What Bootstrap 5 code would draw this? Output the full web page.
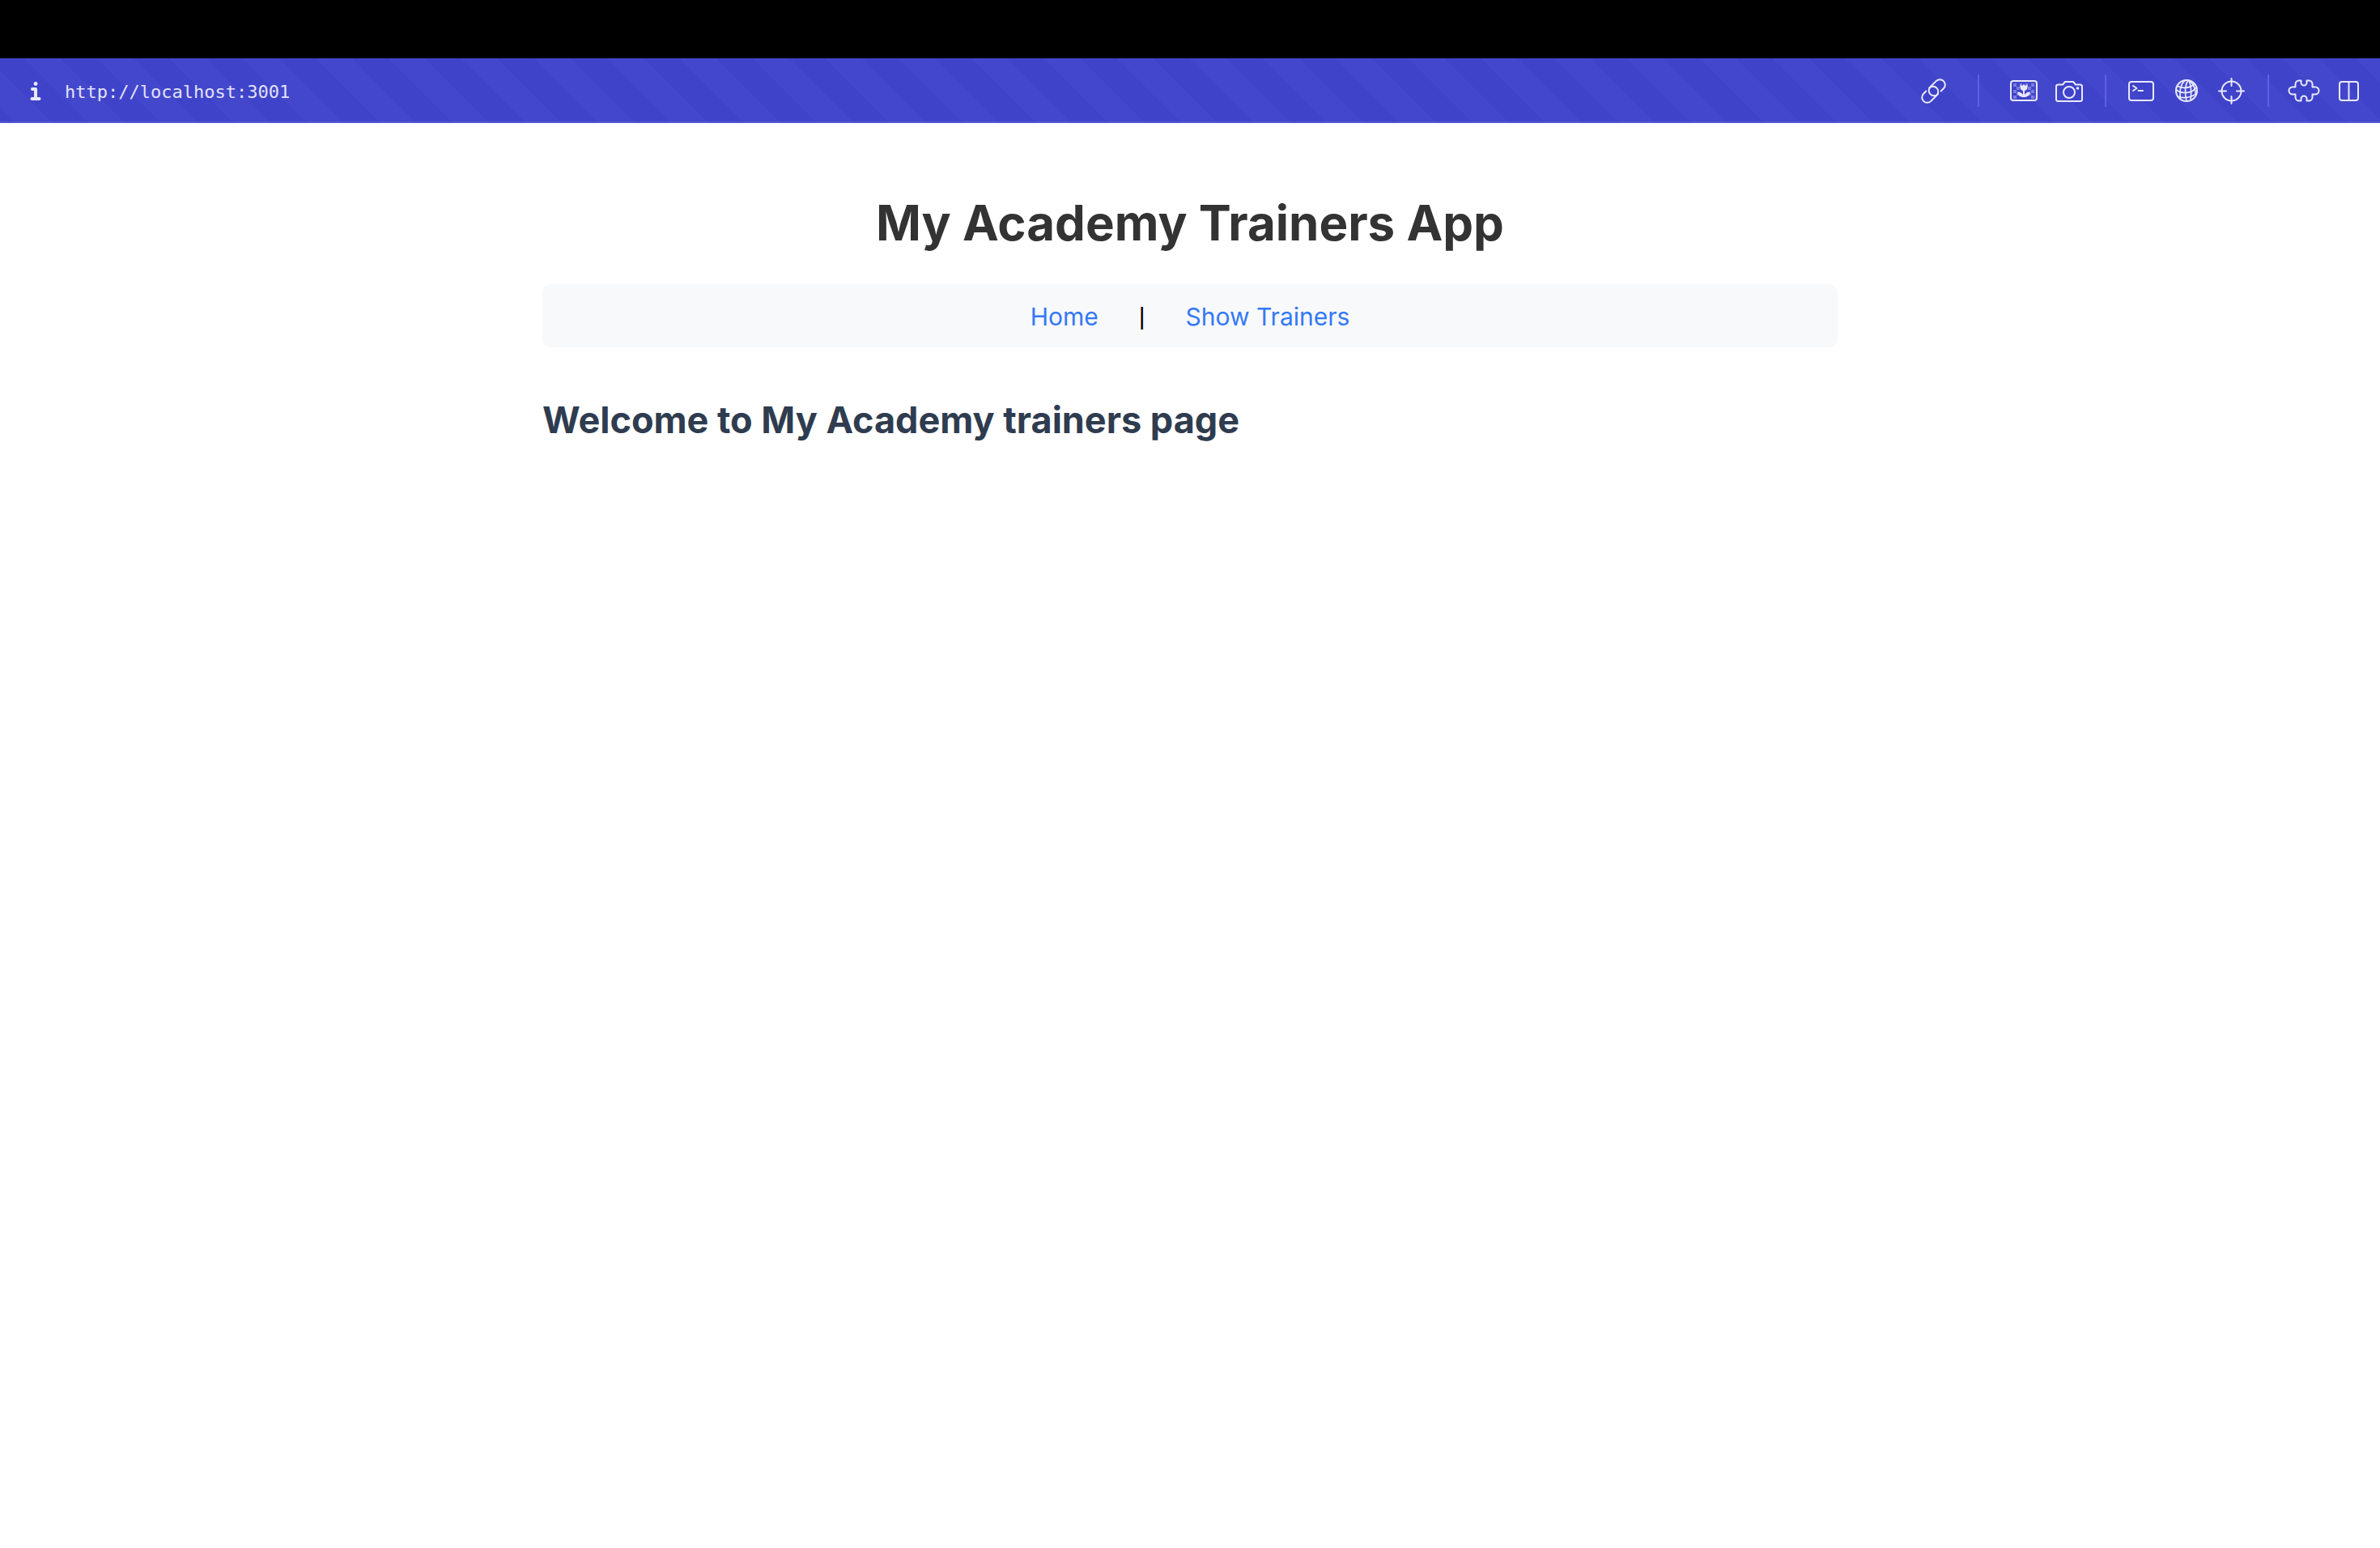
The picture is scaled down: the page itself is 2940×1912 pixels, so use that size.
<!DOCTYPE html>
<html lang="en">
<head>
<meta charset="utf-8">
<meta name="viewport" content="width=device-width, initial-scale=1">
<title>My Academy Trainers App</title>
<link href="https://cdn.jsdelivr.net/npm/bootstrap@5.3.0/dist/css/bootstrap.min.css" rel="stylesheet">
<style>
  body { font-family: Inter, "Liberation Sans", sans-serif; background: #fff; color: #000; }
  .top-strip { height: 72px; background: #000; }
  .dev-bar {
    height: 80px;
    padding: 2px 18px 0 24px;
    border-bottom: 2px solid rgba(255, 255, 255, .1);
    background: #3f43c9 linear-gradient(45deg, #4347cc 25%, transparent 25% 50%, #4347cc 50% 75%, transparent 75%) 30px 0 / 90px 90px;
    color: #e9e9fc;
  }
  .tool { padding: 0; border: 0; background: none; color: inherit; line-height: 0; }
  .tool svg { width: 40px; height: 40px; fill: none; stroke: currentColor; stroke-width: 2; stroke-linecap: round; stroke-linejoin: round; }
  .tool-rule { width: 2px; height: 40px; margin: 0 23px 0 24px; background: #5d60e2; }
  .tool-rule-wide { margin: 0 35px; }
  .address { width: 600px; padding: 4px 0 0; border: 0; background: none; color: #e2e2fb; font: 22px/32px "DejaVu Sans Mono", monospace; outline: 0; }
  .page-wrap { width: 1600px; max-width: 100%; padding-top: 87px; }
  .page-title { font-size: 60px; line-height: 72px; font-weight: 700; color: #333; margin-bottom: 40px; }
  .page-nav { background: #f8f9fb; border-radius: 10px; font-size: 30px; line-height: 38px; padding: 21px 0 19px; margin-bottom: 60px; gap: 50px; }
  .page-nav a { color: #3478f6; text-decoration: none; }
  .page-nav span { font-family: "Liberation Sans", sans-serif; }
  .welcome { font-size: 45px; line-height: 60px; font-weight: 700; color: #2f3c4f; }
</style>
</head>
<body>
<div class="top-strip"></div>
<header class="dev-bar d-flex align-items-center">
  <button class="tool" type="button" aria-label="Site information">
    <svg viewBox="0 0 40 40"><path d="M16 18h4v12M15.500 30h9" stroke-width="4"/><circle cx="20" cy="11.500" r="2.400" fill="currentColor" stroke="none"/></svg>
  </button>
  <input class="address ms-3" type="text" value="http://localhost:3001" aria-label="Address">
  <div class="d-flex align-items-center ms-auto">
    <button class="tool" type="button" aria-label="Copy link">
      <svg viewBox="0 0 40 40"><g transform="rotate(-45 20.500 20.500)"><path d="M14 14H9.500a6.500 6.500 0 0 0 0 13h10a6.500 6.500 0 0 0 0-13"/><path d="M27 27h4.500a6.500 6.500 0 0 0 0-13h-10a6.500 6.500 0 0 0 0 13"/></g></svg>
    </button>
    <div class="tool-rule tool-rule-wide"></div>
    <div class="d-flex gap-3">
      <button class="tool" type="button" aria-label="Image overlay">
        <svg viewBox="0 0 40 40"><g fill="currentColor" stroke="none"><path opacity=".35" d="M7 11h4v4H7zM15 11h3v4h-3zM11 15h4v4h-4zM7 19h4v4H7zM7 26h4v4H7zM11 23h4v3h-4zM29 11h4v4h-4zM25 15h4v4h-4zM29 19h4v4h-4zM25 23h4v3h-4zM29 26h4v4h-4zM22 11h3v4h-3z"/><path d="M15.500 12.500l2.500 1.500 2-2 2 2 2.500-1.500V16c0 2-1.500 3.500-3.500 4v5c1.500-2.500 4-3.500 7-3.500-.5 4-3 6.500-8 6.500s-7.500-2.500-8-6.500c3 0 5.500 1 7 3.500v-5c-2-.5-3.500-2-3.500-4z"/></g><rect x="4" y="8" width="32" height="24" rx="3"/></svg>
      </button>
      <button class="tool" type="button" aria-label="Screenshot">
        <svg viewBox="0 0 40 40"><path d="M6.500 12.500H12l3-3.500h10l3 3.500h5.500A2.500 2.500 0 0 1 36 15v15.500a2.500 2.500 0 0 1-2.500 2.500h-27A2.500 2.500 0 0 1 4 30.500V15a2.500 2.500 0 0 1 2.500-2.500z"/><circle cx="20" cy="22" r="7"/><circle cx="30.500" cy="17" r="1.800" fill="currentColor" stroke="none"/></svg>
      </button>
    </div>
    <div class="tool-rule"></div>
    <div class="d-flex gap-3">
      <button class="tool" type="button" aria-label="Console">
        <svg viewBox="0 0 40 40"><rect x="5" y="9" width="30" height="23" rx="3"/><path d="M10 14l4.500 3-4.500 3M16.500 20h5.500"/></svg>
      </button>
      <button class="tool" type="button" aria-label="Network">
        <svg viewBox="0 0 40 40"><circle cx="20" cy="20" r="13"/><g stroke-width="1.700"><path d="M19 7C13 11 11 19 12.500 30M22 7c-4 6-4 17-2 26M23 7.500c3 7 3 17 2 24.500M24 8c5 4 7 10 7.500 17"/><path d="M8.500 14c5 3.500 15 3.500 21-2M7.500 19c6 5 19 5 24-2.500M9 27c6 3 17 2 23.500-4"/></g></svg>
      </button>
      <button class="tool" type="button" aria-label="Inspect element">
        <svg viewBox="0 0 40 40"><circle cx="19.500" cy="20.500" r="12"/><path d="M19.500 5v9M19.500 27v9M4 20.500h9M26 20.500h9"/></svg>
      </button>
    </div>
    <div class="tool-rule"></div>
    <div class="d-flex gap-3">
      <button class="tool" type="button" aria-label="Extensions">
        <svg viewBox="0 0 40 40"><path d="M6 15.500h3.500V12A4.500 4.500 0 0 1 14 7.500h2.500V10a3.500 3.500 0 0 0 7 0V7.500H26a4.500 4.500 0 0 1 4.500 4.500v3.500H34a4.500 4.500 0 0 1 0 9h-3.500V28a4.500 4.500 0 0 1-4.500 4.500h-2.500V30a3.500 3.500 0 0 0-7 0v2.500H14A4.500 4.500 0 0 1 9.500 28v-3.500H6a4.500 4.500 0 0 1 0-9z"/></svg>
      </button>
      <button class="tool" type="button" aria-label="Split view">
        <svg viewBox="0 0 40 40"><rect x="8" y="9" width="23" height="23" rx="3"/><path d="M19.500 9v23"/></svg>
      </button>
    </div>
  </div>
</header>
<main class="page-wrap mx-auto">
  <h1 class="page-title text-center">My Academy Trainers App</h1>
  <nav class="page-nav d-flex justify-content-center"><a href="#">Home</a><span>|</span><a href="#">Show Trainers</a></nav>
  <h2 class="welcome">Welcome to My Academy trainers page</h2>
</main>
<script src="https://cdn.jsdelivr.net/npm/bootstrap@5.3.0/dist/js/bootstrap.bundle.min.js"></script>
</body>
</html>
